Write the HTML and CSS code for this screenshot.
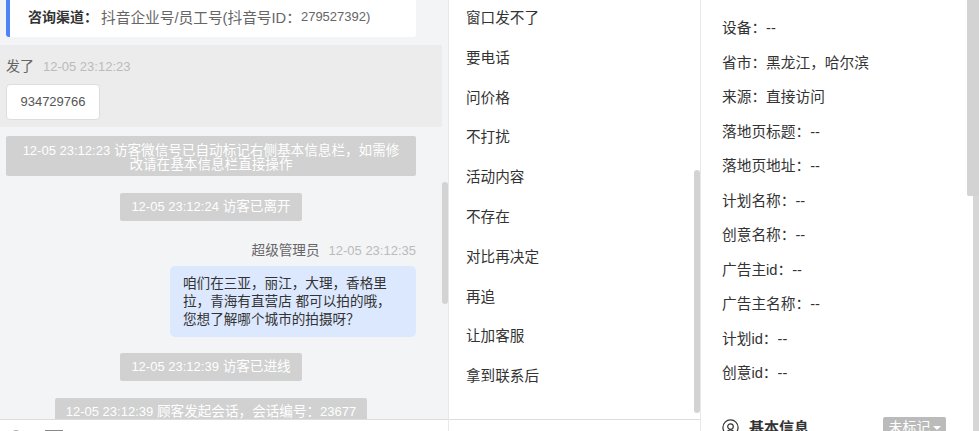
FILE: index.html
```html
<!DOCTYPE html>
<html lang="zh-CN">

<head>
    <meta charset="UTF-8">
    <title>会话详情</title>
    <link rel="stylesheet" href="styles.css">
</head>

<body>
    <div class="page">
        <div class="chat">
            <div class="chat-scroll">
                <div class="chat-list">
                    <div class="channel-card">
                        <b>咨询渠道：</b>抖音企业号/员工号(抖音号ID：<span class="num">279527392)</span>
                    </div>
                    <div class="visitor-row">
                        <div class="msg-head">发了<span class="msg-time">12-05 23:12:23</span></div>
                        <div class="msg-white">934729766</div>
                    </div>
                    <div class="notice notice-wide"><span class="num">12-05 23:12:23</span> 访客微信号已自动标记右侧基本信息栏，如需修改请在基本信息栏直接操作</div>
                    <div class="notice"><span class="num">12-05 23:12:24</span> 访客已离开</div>
                    <div class="agent-row">
                        <div class="msg-head">超级管理员<span class="msg-time">12-05 23:12:35</span></div>
                        <div class="msg-blue">咱们在三亚，丽江，大理，香格里拉，青海有直营店 都可以拍的哦，您想了解哪个城市的拍摄呀？</div>
                    </div>
                    <div class="notice"><span class="num">12-05 23:12:39</span> 访客已进线</div>
                    <div class="notice"><span class="num">12-05 23:12:39</span> 顾客发起会话，会话编号：<span class="num">23677</span></div>
                </div>
                <div class="scrollbar chat-thumb"></div>
            </div>
            <div class="chat-tools">
                <svg class="tool-icon" width="16" height="16" viewBox="0 0 16 16"><circle cx="8" cy="8" r="7" fill="none" stroke="#888" stroke-width="1.3"/></svg>
                <svg class="tool-icon" width="18" height="16" viewBox="0 0 18 16"><rect x="0.500" y="0.500" width="17" height="13" fill="none" stroke="#888"/></svg>
            </div>
        </div>

        <div class="replies">
            <div class="reply-list">
                <div class="reply">窗口发不了</div>
                <div class="reply">要电话</div>
                <div class="reply">问价格</div>
                <div class="reply">不打扰</div>
                <div class="reply">活动内容</div>
                <div class="reply">不存在</div>
                <div class="reply">对比再决定</div>
                <div class="reply">再追</div>
                <div class="reply">让加客服</div>
                <div class="reply">拿到联系后</div>
            </div>
            <div class="scrollbar replies-thumb"></div>
        </div>

        <div class="info">
            <div class="info-list">
                <div class="info-row">设备：--</div>
                <div class="info-row">省市：黑龙江，哈尔滨</div>
                <div class="info-row">来源：直接访问</div>
                <div class="info-row">落地页标题：--</div>
                <div class="info-row">落地页地址：--</div>
                <div class="info-row">计划名称：--</div>
                <div class="info-row">创意名称：--</div>
                <div class="info-row">广告主id：--</div>
                <div class="info-row">广告主名称：--</div>
                <div class="info-row">计划id：--</div>
                <div class="info-row">创意id：--</div>
            </div>
            <div class="info-section">
                <svg class="section-icon" width="17" height="17" viewBox="0 0 17 17"><circle cx="8.500" cy="8.500" r="7.600" fill="none" stroke="#333" stroke-width="1.200"/><circle cx="8.500" cy="7.600" r="2.800" fill="none" stroke="#333" stroke-width="1.200"/><path d="M4 14c1-2 2.600-3 4.500-3s3.500 1 4.500 3" fill="none" stroke="#333" stroke-width="1.200"/></svg>
                <span class="info-title">基本信息</span>
                <span class="tag">未标记<i class="tag-arrow"></i></span>
            </div>
            <div class="info-track"></div>
            <div class="scrollbar info-thumb"></div>
        </div>
    </div>
</body>

</html>
```

FILE: styles.css
```css
* {
    box-sizing: border-box;
}

html,
body {
    height: 100%;
    margin: 0;
    overflow: hidden;
}

body {
    font-family: "Liberation Sans", "Noto Sans CJK SC", sans-serif;
    font-size: 13.600px;
    color: #333;
    background: #fff;
}

.page {
    display: flex;
    height: 431px;
}

.num {
    font-size: 13px;
}

.scrollbar {
    position: absolute;
    width: 6px;
    background: #d3d3d3;
    border-radius: 3px;
}

/* left chat column */
.chat {
    width: 449px;
    display: flex;
    flex-direction: column;
    border-right: 1px solid #e8e8e8;
}

.chat-scroll {
    position: relative;
    height: 420px;
    overflow: hidden;
    background: #f3f4f6;
    border-bottom: 1px solid #ddd;
}

.chat-list {
    width: 442px;
    display: flex;
    flex-direction: column;
}

.channel-card {
    height: 37px;
    margin: 0 26px 8px 6px;
    padding: 0 0 5px 18px;
    display: flex;
    align-items: center;
    white-space: pre;
    font-size: 14.700px;
    color: #666;
    background: #fff;
    border-left: 4px solid #4d84f7;
    border-radius: 0 0 3px 3px;
}

.channel-card b {
    color: #333;
    font-size: 14px;
    margin-right: 3px;
}

.visitor-row {
    height: 82px;
    padding: 11px 6px 0;
    background: #ececec;
}

.msg-head {
    line-height: 20px;
    font-size: 14px;
    color: #666;
}

.msg-time {
    margin-left: 9px;
    font-size: 13px;
    color: #bbb;
}

.msg-white {
    width: 94px;
    height: 36px;
    margin-top: 7px;
    line-height: 34px;
    text-align: center;
    font-size: 13px;
    color: #555;
    background: #fff;
    border: 1px solid #ddd;
    border-radius: 4px;
}

.notice {
    align-self: center;
    height: 28px;
    line-height: 28px;
    margin: 17px 20px 0 0;
    padding: 0 11px;
    white-space: nowrap;
    color: #fff;
    background: #d0d1d0;
    border-radius: 2px;
    text-align: center;
}

.notice-wide {
    width: 410px;
    height: 40px;
    margin: 9px 26px 0 6px;
    padding: 8px 16px 0;
    line-height: 14px;
    white-space: normal;
}

.agent-row {
    margin: 20px 26px -1px 0;
    display: flex;
    flex-direction: column;
    align-items: flex-end;
}

.agent-row .msg-head {
    font-size: 13.600px;
}

.msg-blue {
    width: 246px;
    margin-top: 5px;
    padding: 9px 14px 8px 13px;
    line-height: 18px;
    color: #333;
    background: #dce8fe;
    border-radius: 5px;
}

.chat-thumb {
    left: 442px;
    top: 182px;
    height: 122px;
}

.chat-tools {
    height: 11px;
    display: flex;
    gap: 21px;
    padding: 10px 0 0 8px;
    overflow: hidden;
}

.tool-icon {
    flex: none;
}

/* middle quick replies */
.replies {
    position: relative;
    width: 252px;
    overflow: hidden;
    border-right: 1px solid #e8e8e8;
}

.reply-list {
    height: 420px;
    padding: 0 0 0 17px;
    font-size: 14.600px;
    border-bottom: 1px solid #ddd;
}

.reply {
    height: 39.800px;
    line-height: 37px;
    color: #333;
}

.replies-thumb {
    left: 245px;
    top: 170px;
    height: 243px;
}

/* right info column */
.info {
    position: relative;
    flex: 1;
    padding-left: 21px;
    font-size: 14.700px;
    overflow: hidden;
}

.info-list {
    padding-top: 11px;
}

.info-row {
    height: 34.500px;
    line-height: 34px;
    color: #333;
}

.info-section {
    position: absolute;
    left: 21px;
    top: 417px;
    display: flex;
    align-items: flex-start;
    width: 224px;
}

.section-icon {
    margin-top: 2px;
}

.info-title {
    margin-left: 10px;
    font-size: 15px;
    font-weight: bold;
    line-height: 22px;
}

.tag {
    margin-left: auto;
    width: 63px;
    height: 20px;
    line-height: 20px;
    text-align: center;
    font-size: 14px;
    color: #fff;
    background: #bbb;
    border-radius: 2px;
}

.tag-arrow {
    display: inline-block;
    margin-left: 2px;
    vertical-align: 2px;
    border: 4px solid transparent;
    border-top-color: #fff;
    border-bottom: 0;
}

.info-track {
    position: absolute;
    right: 0;
    top: 0;
    width: 6px;
    height: 100%;
    background: #d6d6d6;
}

.info-thumb {
    left: 266px;
    top: 0;
    width: 12px;
    height: 196px;
    border-radius: 0 0 2px 2px;
}
```
